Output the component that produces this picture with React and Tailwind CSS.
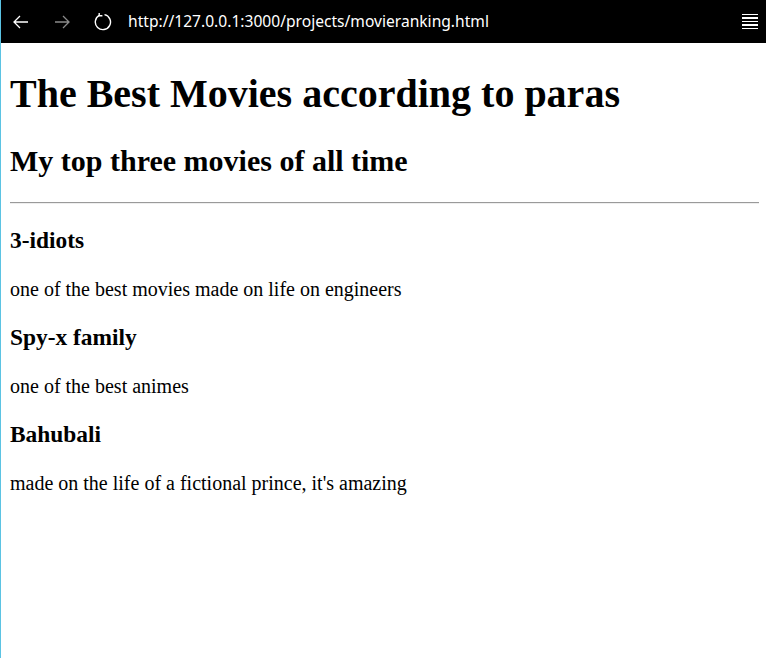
export default function App() {
    return (
        <div className="min-h-screen bg-white border-l border-[#5bc3e3]">
            <div className="h-[43px] bg-black flex items-center text-white">
                <svg width="18" height="18" viewBox="0 0 18 18" className="ml-[11px]" fill="none" stroke="white" strokeWidth="1.3">
                    <path d="M16 9H2M8 3L2 9l6 6" />
                </svg>
                <svg width="18" height="18" viewBox="0 0 18 18" className="ml-[23px]" fill="none" stroke="#8a8a8a" strokeWidth="1.3">
                    <path d="M2 9h14M10 3l6 6-6 6" />
                </svg>
                <svg width="18" height="18" viewBox="0 0 18 18" className="ml-[23px]" fill="none" stroke="white" strokeWidth="1.4">
                    <path d="M5.2 2.4A7.6 7.6 0 1 0 10.5 1.6" />
                    <path d="M5.2 0v2.8H8.4" />
                </svg>
                <div className="ml-[16px] text-[15.6px] font-['Segoe_UI','Noto_Sans',sans-serif]">http://127.0.0.1:3000/projects/movieranking.html</div>
                <div className="ml-auto mr-[8px] flex flex-col gap-[2px] w-[16px]">
                    <div className="h-[1.5px] bg-white"></div>
                    <div className="h-[1.5px] bg-white"></div>
                    <div className="h-[1.5px] bg-white"></div>
                    <div className="h-[1.5px] bg-white"></div>
                    <div className="h-[1.5px] bg-white"></div>
                </div>
            </div>
            <div className="pl-[9px] pr-[7px] font-['Times_New_Roman','Liberation_Serif',serif] text-black">
                <h1 className="mt-[29px] text-[40px] font-bold leading-[44px]">The Best Movies according to paras</h1>
                <h2 className="mt-[28px] text-[30px] font-bold leading-[33px]">My top three movies of all time</h2>
                <hr className="mt-[25px] border-t border-t-[#9a9a9a] border-b border-b-[#eeeeee]" />
                <h3 className="mt-[23px] text-[23.4px] font-bold leading-[27px]">3-idiots</h3>
                <p className="mt-[23.5px] text-[20px] leading-[23px]">one of the best movies made on life on engineers</p>
                <h3 className="mt-[23.5px] text-[23.4px] font-bold leading-[27px]">Spy-x family</h3>
                <p className="mt-[23.5px] text-[20px] leading-[23px]">one of the best animes</p>
                <h3 className="mt-[23.5px] text-[23.4px] font-bold leading-[27px]">Bahubali</h3>
                <p className="mt-[23.5px] text-[20px] leading-[23px]">made on the life of a fictional prince, it's amazing</p>
            </div>
        </div>
    )
}
